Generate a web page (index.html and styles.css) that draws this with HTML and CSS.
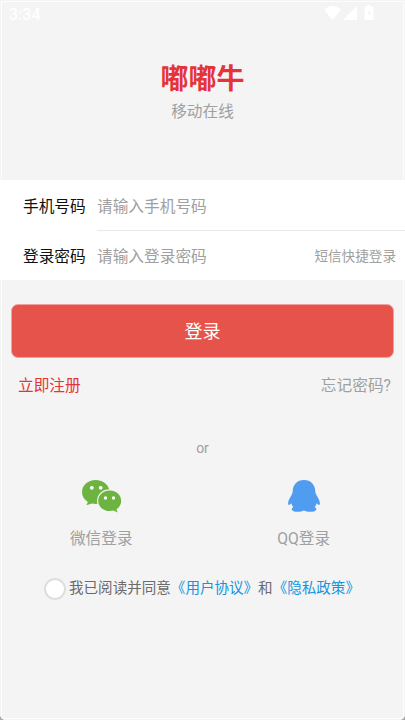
FILE: index.html
```
<!DOCTYPE html>
<html lang="zh-CN">
<head>
<meta charset="utf-8">
<title>嘟嘟牛</title>
<link rel="stylesheet" href="styles.css">
</head>
<body>
<main class="screen">
  <div class="status">
    <span class="clock">3:34</span>
    <svg class="status-icons" width="50" height="16" viewBox="0 0 50 16" fill="currentColor">
      <path d="M0 4.4Q8.500-2.400 17 4.400L8.500 15Z"/>
      <path d="M33 1V15H19Z"/>
      <path fill-rule="evenodd" d="M43 1.500V0h4v1.500h2.500V15h-9V1.500ZM45.500 4L43.500 8.500H45V11.500L47 7.300H45.500Z"/>
    </svg>
  </div>
  <header class="brand">
    <h1>嘟嘟牛</h1>
    <p>移动在线</p>
  </header>
  <section class="fields">
    <div class="row"><span class="label">手机号码</span><div class="entry first"><span>请输入手机号码</span></div></div>
    <div class="row"><span class="label">登录密码</span><div class="entry"><span>请输入登录密码</span><span class="sms">短信快捷登录</span></div></div>
  </section>
  <button class="login">登录</button>
  <div class="links"><span class="register">立即注册</span><span>忘记密码?</span></div>
  <div class="or">or</div>
  <div class="social">
    <div class="provider">
      <svg class="wechat" width="40" height="34" viewBox="0 0 40 34">
        <g fill="#6db33f">
          <path d="M13.700 0C6.100 0 0 5.300 0 12c0 4.100 2.200 7.700 5.900 9.900L4.300 25.300 10 23.400c1.200.3 2.500.5 3.700.5 7.600 0 13.800-5.300 13.800-11.900S21.300 0 13.700 0Z"/>
          <path stroke="#f4f4f4" stroke-width="2.400" paint-order="stroke" d="M27.700 10.400c-6.400 0-11.500 4.600-11.500 10.300s5.100 10.400 11.500 10.400c1.200 0 2.400-.2 3.500-.5l4.500 1.800-1.300-3.100c3-1.900 4.800-5 4.800-8.600 0-5.700-5.100-10.300-11.500-10.300Z"/>
        </g>
        <g fill="#fff"><circle cx="9.800" cy="7.800" r="1.900"/><circle cx="18.700" cy="7.800" r="1.900"/><circle cx="23.500" cy="18" r="1.700"/><circle cx="31.500" cy="18" r="1.700"/></g>
      </svg>
      <span>微信登录</span>
    </div>
    <div class="provider">
      <svg width="34" height="34" viewBox="0 0 34 34" fill="#4f9cf0">
        <path d="M17 0C10.200 0 5.700 4.800 5.700 11.500c0 1.600-.8 2.400-1.400 4C2.500 18.400.8 21.200 1.200 24.200c.2 1.300 1.400 1.100 3.100-.9.300 1.500 1 2.800 2.100 4-1.400.6-1.900 1.500-1.400 2.600 1 2.200 8.600 2.500 11.900.6 3.300 1.900 11 1.600 12.200-.6.500-1.100 0-2-1.500-2.600 1.100-1.200 1.800-2.500 2.100-4 1.700 2 2.800 2.200 3.100.9.400-3-1.300-5.800-3.100-8.700-.6-1.600-1.400-2.400-1.400-4C28.300 4.800 23.800 0 17 0Z"/>
      </svg>
      <span>QQ登录</span>
    </div>
  </div>
  <div class="agreement"><i class="check"></i><span class="terms">我已阅读并同意<a>《用户协议》</a>和<a>《隐私政策》</a></span></div>
</main>
</body>
</html>
```
FILE: styles.css
```
* { box-sizing: border-box; }
body { margin: 0; background: #aaa; font-family: Roboto, "Noto Sans CJK SC", sans-serif; }
.screen {
  height: 720px;
  overflow: hidden;
  display: flex;
  flex-direction: column;
  background: #f4f4f4;
  border-radius: 0 0 6px 6px;
  box-shadow: inset 0 0 0 1px #f4f4f4, inset 0 0 0 2px #fdfdfd;
  color: #a0a0a0;
  font-size: 15.700px;
  line-height: 24px;
  white-space: nowrap;
}
.status { height: 60px; padding: 6px 31px 0 9px; display: flex; justify-content: space-between; color: #fff; }
.clock { font-size: 16px; line-height: 17px; font-weight: 500; }
.status-icons { margin: -1px 0 0; }
.brand { height: 120px; text-align: center; }
.brand h1 { margin: 0; font-size: 28px; line-height: 40px; font-weight: 700; color: #e4343a; }
.brand p { margin: 0; line-height: 24px; }
.fields { height: 100px; background: #fff; }
.row { height: 51px; display: flex; align-items: stretch; line-height: 53px; }
.row + .row { height: 49px; line-height: 51px; }
.label { width: 97px; padding-left: 23px; color: #111; }
.entry { flex: 1; display: flex; justify-content: space-between; padding-right: 9px; }
.first { border-bottom: 1px solid #e9e9e9; }
.sms { font-size: 13.600px; }
.login {
  flex: none;
  height: 54px;
  margin: 24px 11px 0;
  padding: 1px 0 0;
  border: 1px solid #efa19b;
  border-radius: 7px;
  background: #e6534b;
  color: #fff;
  font: 18px/52px Roboto, "Noto Sans CJK SC", sans-serif;
}
.links { display: flex; justify-content: space-between; padding: 0 14px 0 18px; margin-top: 16px; }
.register { color: #e4343a; }
.or { text-align: center; font-size: 14px; margin-top: 38px; }
.social { display: grid; grid-template-columns: 1fr 1fr; margin-top: 20px; }
.provider { display: flex; flex-direction: column; align-items: center; gap: 13px; }
.wechat { margin-left: 1px; }
.agreement { display: flex; align-items: center; margin: 25px 0 0 44px; gap: 3px; font-size: 14.550px; color: #6b6b6b; }
.terms { padding-top: 1px; }
.agreement a { color: #1495e0; }
.check { width: 22px; height: 22px; border: 2px solid #dedede; border-radius: 50%; background: #fff; }
```
